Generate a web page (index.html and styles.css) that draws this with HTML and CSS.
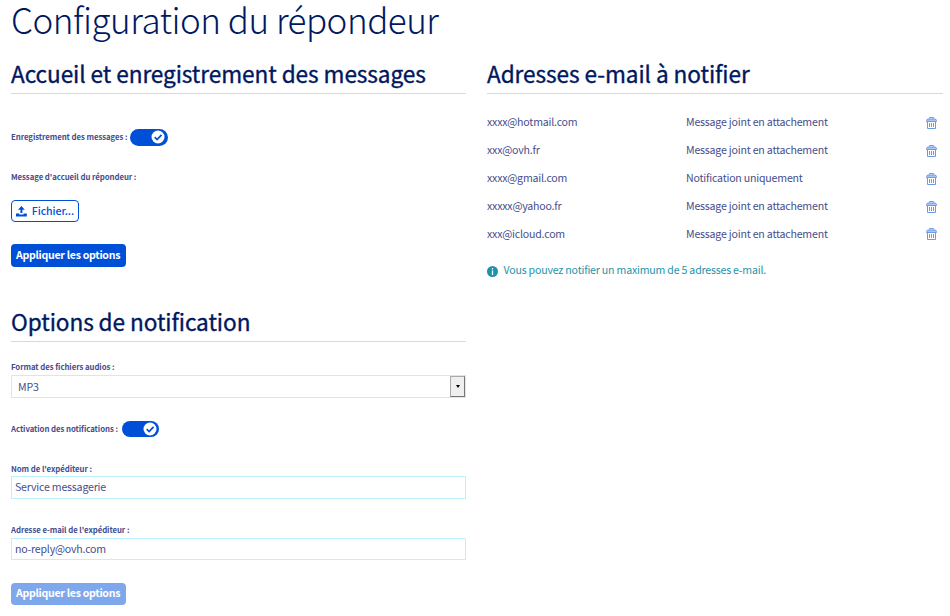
FILE: index.html
```html
<!DOCTYPE html>
<html lang="fr">
<head>
<meta charset="utf-8">
<title>Configuration du répondeur</title>
<link rel="stylesheet" href="styles.css">
</head>
<body>
<svg class="symbols" aria-hidden="true">
  <symbol id="trash" viewBox="0 0 11 12"><path fill="#a9c5f3" d="M1 2h9v2H1z"/><path fill="none" stroke="currentColor" d="M3.500 1.500V.5h4v1M.5 4.500V3.500l1-1.500h8l1 1.500v1zM1.500 4.500v7h8v-7M3.500 6v4M5.500 6v4M7.500 6v4"/></symbol>
  <symbol id="check" viewBox="0 0 14 14"><circle cx="7" cy="7" r="6.500" fill="#fff"/><path d="M3.700 7.200l2.400 2.300 4.400-4.600" fill="none" stroke="#0050d7" stroke-width="1.700"/></symbol>
</svg>
<main class="page">
  <h1 class="title">Configuration du répondeur</h1>
  <div class="columns">
    <div class="column">
      <section class="greeting">
        <h2 class="heading">Accueil et enregistrement des messages</h2>
        <div class="switch-row record"><span class="label">Enregistrement des messages :</span><span class="switch"><svg><use href="#check"/></svg></span></div>
        <div class="label greeting-label">Message d'accueil du répondeur :</div>
        <button class="file"><svg viewBox="0 0 11 11"><path fill="currentColor" d="M5.500 0L9 3.800H6.500V7H4.500V3.800H2zM0 7.500h3.300v1h4.400v-1H11v3H0z"/></svg><span>Fichier...</span></button>
        <button class="apply">Appliquer les options</button>
      </section>
      <section class="options">
        <h2 class="heading">Options de notification</h2>
        <div class="label format-label">Format des fichiers audios :</div>
        <div class="field select"><span>MP3</span><i class="arrow"></i></div>
        <div class="switch-row activate"><span class="label">Activation des notifications :</span><span class="switch"><svg><use href="#check"/></svg></span></div>
        <div class="label name-label">Nom de l'expéditeur :</div>
        <div class="field name"><span>Service messagerie</span></div>
        <div class="label mail-label">Adresse e-mail de l'expéditeur :</div>
        <div class="field short"><span>no-reply@ovh.com</span></div>
        <button class="apply disabled">Appliquer les options</button>
      </section>
    </div>
    <section class="column">
      <h2 class="heading">Adresses e-mail à notifier</h2>
      <ul class="list">
        <li><span>xxxx@hotmail.com</span><span>Message joint en attachement</span><svg><use href="#trash"/></svg></li>
        <li><span>xxx@ovh.fr</span><span>Message joint en attachement</span><svg><use href="#trash"/></svg></li>
        <li><span>xxxx@gmail.com</span><span>Notification uniquement</span><svg><use href="#trash"/></svg></li>
        <li><span>xxxxx@yahoo.fr</span><span>Message joint en attachement</span><svg><use href="#trash"/></svg></li>
        <li><span>xxx@icloud.com</span><span>Message joint en attachement</span><svg><use href="#trash"/></svg></li>
      </ul>
      <p class="info"><svg viewBox="0 0 11 11"><circle cx="5.500" cy="5.500" r="5.500" fill="currentColor"/><path d="M5.500 2v1.500M5.500 4.600V9" stroke="#fff" stroke-width="1.300"/></svg><span>Vous pouvez notifier un maximum de 5 adresses e-mail.</span></p>
    </section>
  </div>
</main>
</body>
</html>
```

FILE: styles.css
```css
* { box-sizing: border-box; }
body {
  margin: 0;
  background: #fff;
  color: #454d8c;
  font: 10.6px/16px "Noto Sans CJK SC", "Noto Sans", sans-serif;
  letter-spacing: -0.2px;
}
.symbols { position: absolute; width: 0; height: 0; }
.page { height: 616px; padding: 0 7px 0 11px; }
.title { margin: 0; height: 54px; color: #00185e; font-size: 35px; font-weight: 300; line-height: 38px; letter-spacing: -0.48px; }
.columns { display: grid; grid-template-columns: 455px 456px; column-gap: 21px; }
.heading { margin: 0; height: 40px; border-bottom: 1px solid #d9d9d9; color: #00185e; font-size: 22.6px; font-weight: 400; line-height: 39px; letter-spacing: -0.07px; -webkit-text-stroke: 0.35px #00185e; }
.label { display: block; font-size: 7.8px; font-weight: 700; line-height: 12px; letter-spacing: -0.06px; }
.switch-row { display: flex; align-items: center; gap: 3px; height: 18px; }
.record { margin-top: 34px; }
.switch { display: flex; align-items: center; justify-content: flex-end; width: 38px; height: 17px; padding-right: 3px; border-radius: 9px; background: #0050d7; }
.switch svg { width: 14px; height: 14px; }
.greeting { height: 248px; }
.greeting-label { margin-top: 25px; }
button { display: flex; align-items: center; border: 0; border-radius: 4px; padding: 0 5px; font: inherit; letter-spacing: inherit; white-space: nowrap; }
.file { width: 68px; height: 22px; margin-top: 17px; border: 1px solid #0050d7; background: #fff; color: #0050d7; font-weight: 500; gap: 5px; padding: 0 4px; letter-spacing: -0.1px; }
.file svg { width: 11px; height: 11px; }
.apply { width: 115px; height: 23px; margin-top: 22px; padding-bottom: 1px; background: #0050d7; color: #fff; font-weight: 700; letter-spacing: -0.3px; }
.format-label { margin-top: 19px; }
.field { display: flex; align-items: center; height: 23px; margin-top: 2px; padding-left: 3px; border: 1px solid #bef1ff; }
.select { padding-left: 6px; justify-content: space-between; }
.arrow { display: flex; align-items: center; justify-content: center; width: 15px; height: 21px; border: 1px solid #aaa; border-right-color: #777; border-bottom-color: #777; background: #efefef; }
.arrow::after { content: ""; border: 2.500px solid transparent; border-top: 3px solid #000; border-bottom: 0; }
.activate { margin-top: 22px; gap: 4px; }
.activate .switch { width: 37px; height: 16px; padding-right: 2px; }
.name-label { margin-top: 25px; }
.name { margin-top: 1px; padding-bottom: 1px; }
.mail-label { margin-top: 25px; }
.short { height: 22px; }
.disabled { background: #7fa7eb; height: 22px; margin-top: 23px; padding-bottom: 2px; }
.list { list-style: none; margin: 14px 0 0; padding: 0; }
.list li { display: grid; grid-template-columns: 199px 1fr 11px; align-items: center; height: 28px; padding-right: 6px; }
.list svg { width: 11px; height: 12px; color: #6c99e6; margin-top: 2px; }
.list li:last-child svg { margin-top: 0; }
.info { display: flex; align-items: center; gap: 5.500px; height: 16px; margin: 14px 0 0; color: #1d93a8; }
.info svg { width: 11px; height: 11px; margin-top: 2px; }
```
